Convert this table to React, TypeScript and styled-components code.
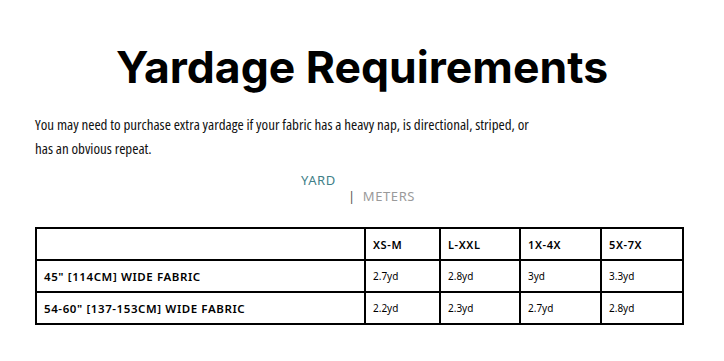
import React from "react";
import styled, { createGlobalStyle } from "styled-components";

const GlobalStyle = createGlobalStyle`
  body {
    margin: 0;
    background: #ffffff;
    color: #000000;
  }
`;

interface Row {
  label: string;
  values: string[];
}

const sizes = ["XS-M", "L-XXL", "1X-4X", "5X-7X"];
const colWidths = [329, 75, 80, 81, 82];

const rows: Row[] = [
  { label: "45\" [114CM] WIDE FABRIC", values: ["2.7yd", "2.8yd", "3yd", "3.3yd"] },
  { label: "54-60\" [137-153CM] WIDE FABRIC", values: ["2.2yd", "2.3yd", "2.7yd", "2.8yd"] },
];

export default function App() {
  return (
    <Page>
      <GlobalStyle />
      <Title>Yardage Requirements</Title>
      <Intro>
        You may need to purchase extra yardage if your fabric has a heavy nap, is directional, striped, or
        has an obvious repeat.
      </Intro>
      <UnitToggle>
        <Unit $active>YARD</Unit>
        <UnitSecond>
          <Divider>|</Divider>
          <Unit>METERS</Unit>
        </UnitSecond>
      </UnitToggle>
      <Table>
        <colgroup>
          {colWidths.map((w, i) => (
            <col key={i} style={{ width: w }} />
          ))}
        </colgroup>
        <thead>
          <tr>
            <HeadCell />
            {sizes.map((s) => (
              <HeadCell key={s}>{s}</HeadCell>
            ))}
          </tr>
        </thead>
        <tbody>
          {rows.map((row) => (
            <tr key={row.label}>
              <LabelCell>{row.label}</LabelCell>
              {row.values.map((v, i) => (
                <Cell key={i}>{v}</Cell>
              ))}
            </tr>
          ))}
        </tbody>
      </Table>
    </Page>
  );
}

const Page = styled.div`
  width: 724px;
  padding: 37px 35px 0;
  box-sizing: border-box;
`;

const Title = styled.h1`
  margin: 0;
  text-align: center;
  font-family: Inter, "Noto Sans", sans-serif;
  font-weight: 700;
  font-size: 44.5px;
  line-height: 60px;
  letter-spacing: 0;
`;

const Intro = styled.p`
  margin: 15px 0 0;
  max-width: 500px;
  font-family: "Open Sans", sans-serif;
  font-stretch: condensed;
  font-size: 15px;
  line-height: 24px;
  color: #111;
`;

const UnitToggle = styled.div`
  display: flex;
  flex-direction: column;
  align-items: flex-start;
  margin: 12px 0 0 266px;
  font-family: "Noto Sans", sans-serif;
  font-size: 13px;
  letter-spacing: 0.6px;
  line-height: 16px;
`;

const UnitSecond = styled.div`
  display: flex;
  gap: 7px;
  margin-left: 47px;
`;

const Unit = styled.span<{ $active?: boolean }>`
  color: ${({ $active }) => ($active ? "#3f7f88" : "#9a9a9a")};
`;

const Divider = styled.span`
  color: #555;
`;

const Table = styled.table`
  margin-top: 23px;
  width: 649px;
  table-layout: fixed;
  border-collapse: collapse;
  font-family: "Noto Sans", sans-serif;
  font-size: 10px;

  td,
  th {
    border: 2px solid #000;
    height: 30px;
    padding: 0 0 0 7px;
    text-align: left;
    vertical-align: middle;
  }
`;

const HeadCell = styled.th`
  font-size: 11px;
  font-weight: 600;
  letter-spacing: 0.6px;
`;

const LabelCell = styled.td`
  font-size: 11.5px;
  font-weight: 600;
  letter-spacing: 0.6px;
`;

const Cell = styled.td`
  font-weight: 400;
`;
